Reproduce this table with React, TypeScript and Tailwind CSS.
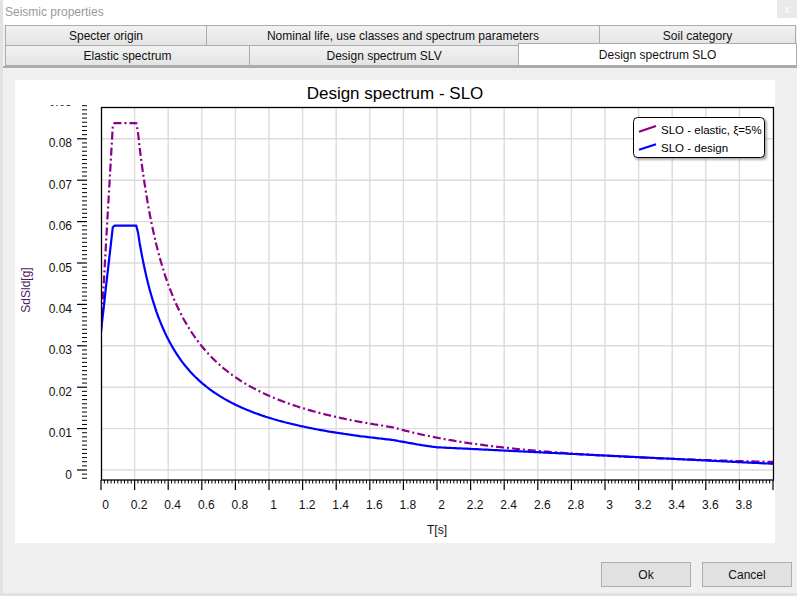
import React from "react";

const TB = 0.071, TC = 0.214, TD = 1.74;
const AGS = 0.0335;

// elastic and design spectra
const elastic = (t: number) => {
  const p = 0.0838;
  if (t < TB) return AGS + (p - AGS) * (t / TB);
  if (t < TC) return p;
  if (t < TD) return (p * TC) / t;
  return (p * TC * TD) / (t * t);
};
const design = (t: number) => {
  const p = 0.059;
  if (t < TB) return AGS + (p - AGS) * (t / TB);
  if (t < TC) return p;
  if (t < TD) return (p * TC) / t;
  if (t < 2) return (p * TC * TD) / (t * t);
  const v2 = (p * TC * TD) / 4;
  return v2 + ((0.0015 - v2) * (t - 2)) / 2;
};

const X = (t: number) => 86 + t * 168;
const Y = (v: number) => 390 - v * 4140;

const pathOf = (f: (t: number) => number) => {
  const pts: string[] = [];
  for (let i = 0; i <= 400; i++) {
    const t = i / 100;
    pts.push(`${X(t).toFixed(1)},${Y(f(t)).toFixed(1)}`);
  }
  return "M" + pts.join(" L");
};

function Chart() {
  const yMinor: number[] = [];
  for (let i = -2; i <= 88; i++) yMinor.push(i);
  const xMinor: number[] = [];
  for (let i = 0; i <= 200; i++) xMinor.push(i);
  const xLabels: number[] = [];
  for (let i = 0; i < 20; i++) xLabels.push(i);
  const yLabels = [0, 1, 2, 3, 4, 5, 6, 7, 8, 9];

  return (
    <svg width="760" height="463" viewBox="0 0 760 463" fontFamily="'Liberation Sans', Arial, sans-serif">
      <defs>
        <clipPath id="plot">
          <rect x="86" y="27" width="673" height="373" />
        </clipPath>
        <clipPath id="lbl">
          <rect x="0" y="25" width="86" height="420" />
        </clipPath>
        <filter id="shadow" x="-10%" y="-10%" width="130%" height="150%">
          <feGaussianBlur stdDeviation="1.2" />
        </filter>
      </defs>

      <text x="380" y="19" textAnchor="middle" fontSize="17" fill="#000">Design spectrum - SLO</text>

      {/* grid */}
      {xLabels.slice(1).map((i) => (
        <line key={"gx" + i} x1={X(i * 0.2)} x2={X(i * 0.2)} y1="27" y2="400" stroke="#dcdcdc" strokeWidth="1.4" />
      ))}
      {[0, 1, 2, 3, 4, 5, 6, 7, 8].map((i) => (
        <line key={"gy" + i} x1="86" x2="759" y1={Y(i / 100)} y2={Y(i / 100)} stroke="#dcdcdc" strokeWidth="1.4" />
      ))}

      {/* curves */}
      <g clipPath="url(#plot)" fill="none" strokeLinejoin="round">
        <path d={pathOf(elastic)} stroke="#8b008b" strokeWidth="2.2" strokeDasharray="8 3 2 3" />
        <path d={pathOf(design)} stroke="#0000ff" strokeWidth="2.2" />
      </g>

      <rect x="86.5" y="27.5" width="672" height="372.5" fill="none" stroke="#000" strokeWidth="1.3" />

      {/* y ticks */}
      {yMinor.map((i) =>
        i % 10 === 0 ? (
          <line key={"yt" + i} x1="62" x2="72" y1={Y(i / 1000)} y2={Y(i / 1000)} stroke="#000" strokeWidth="1.2" />
        ) : (
          <line key={"yt" + i} x1="67" x2="72" y1={Y(i / 1000)} y2={Y(i / 1000)} stroke="#000" strokeWidth="1" />
        )
      )}
      <g clipPath="url(#lbl)">
        {yLabels.map((i) => (
          <text key={"yl" + i} x="57" y={Y(i / 100) + 8.5} textAnchor="end" fontSize="12" fill="#111">
            {i === 0 ? "0" : (i / 100).toFixed(2)}
          </text>
        ))}
      </g>

      {/* x ticks */}
      {xMinor.map((i) =>
        i % 10 === 0 ? (
          <line key={"xt" + i} x1={X(i * 0.02)} x2={X(i * 0.02)} y1="400" y2="410" stroke="#000" strokeWidth="1.2" />
        ) : (
          <line key={"xt" + i} x1={X(i * 0.02)} x2={X(i * 0.02)} y1="400" y2="403.5" stroke="#000" strokeWidth="1" />
        )
      )}
      {xLabels.map((i) => (
        <text key={"xl" + i} x={X(i * 0.2) + 4.5} y="429" textAnchor="middle" fontSize="12" fill="#111">
          {String(Number((i * 0.2).toFixed(1)))}
        </text>
      ))}

      <text x="422" y="454" textAnchor="middle" fontSize="12" fill="#111">T[s]</text>
      <text x="19" y="214" textAnchor="middle" fontSize="12" fill="#4b1a5e" transform="rotate(-90 15 214)">SdSld[g]</text>

      {/* legend */}
      <rect x="620" y="39" width="132" height="41" rx="4" fill="#777" opacity="0.6" filter="url(#shadow)" />
      <rect x="618.5" y="37.5" width="131" height="40" rx="4" fill="#fff" stroke="#000" strokeWidth="1" />
      <line x1="624" y1="51.7" x2="641" y2="46" stroke="#8b008b" strokeWidth="2.2" />
      <line x1="624" y1="69.7" x2="641" y2="64.3" stroke="#0000ff" strokeWidth="2.2" />
      <text x="646" y="54" fontSize="11.5" fill="#000">SLO - elastic, ξ=5%</text>
      <text x="646" y="72" fontSize="11.5" fill="#000">SLO - design</text>
    </svg>
  );
}

function Tab({ w, label, active }: { w: string; label: string; active?: boolean }) {
  return (
    <div
      className={`${w} -ml-px flex items-center justify-center border border-[#acacac] text-[12px] text-[#111] ${
        active ? "relative z-10 -mt-[2px] h-[23px] bg-white" : "h-[21px] bg-linear-to-b from-[#f2f2f2] to-[#e4e4e4]"
      }`}
    >
      {label}
    </div>
  );
}

export default function App() {
  return (
    <div className="flex h-[596px] w-[797px] flex-col overflow-hidden border-b-[3px] border-l-[3px] border-[#e2e2e2] bg-[#f0f0f0] font-['Liberation_Sans',Arial,sans-serif]">
      <div className="flex h-[25px] shrink-0 items-start justify-between bg-white">
        <span className="pl-[2px] pt-[3px] text-[12px] text-[#9a9a9a]">Seismic properties</span>
        <div className="flex h-[18px] w-[20px] items-center justify-center bg-[#e9e9e9] text-[10px] text-white">x</div>
      </div>

      <div className="shrink-0 pl-[3px]">
        <div className="flex">
          <Tab w="w-[202px]" label="Specter origin" />
          <Tab w="w-[394px]" label="Nominal life, use classes and spectrum parameters" />
          <Tab w="w-[197px]" label="Soil category" />
        </div>
        <div className="-mt-px flex items-end">
          <Tab w="w-[246px]" label="Elastic spectrum" />
          <Tab w="w-[271px]" label="Design spectrum SLV" />
          <Tab w="w-[280px]" label="Design spectrum SLO" active />
        </div>
      </div>
      <div className="h-[2px] shrink-0 bg-[#ababab]" />

      <div className="shrink-0 pl-[12px] pr-[22px] pt-[12px]">
        <div className="h-[463px] bg-white">
          <Chart />
        </div>
      </div>

      <div className="mt-[19px] flex justify-end gap-[11px] pr-[5px]">
        <button className="h-[25px] w-[90px] border border-[#adadad] bg-[#e1e1e1] text-[12px] text-[#111]">Ok</button>
        <button className="h-[25px] w-[90px] border border-[#adadad] bg-[#e1e1e1] text-[12px] text-[#111]">Cancel</button>
      </div>
    </div>
  );
}
